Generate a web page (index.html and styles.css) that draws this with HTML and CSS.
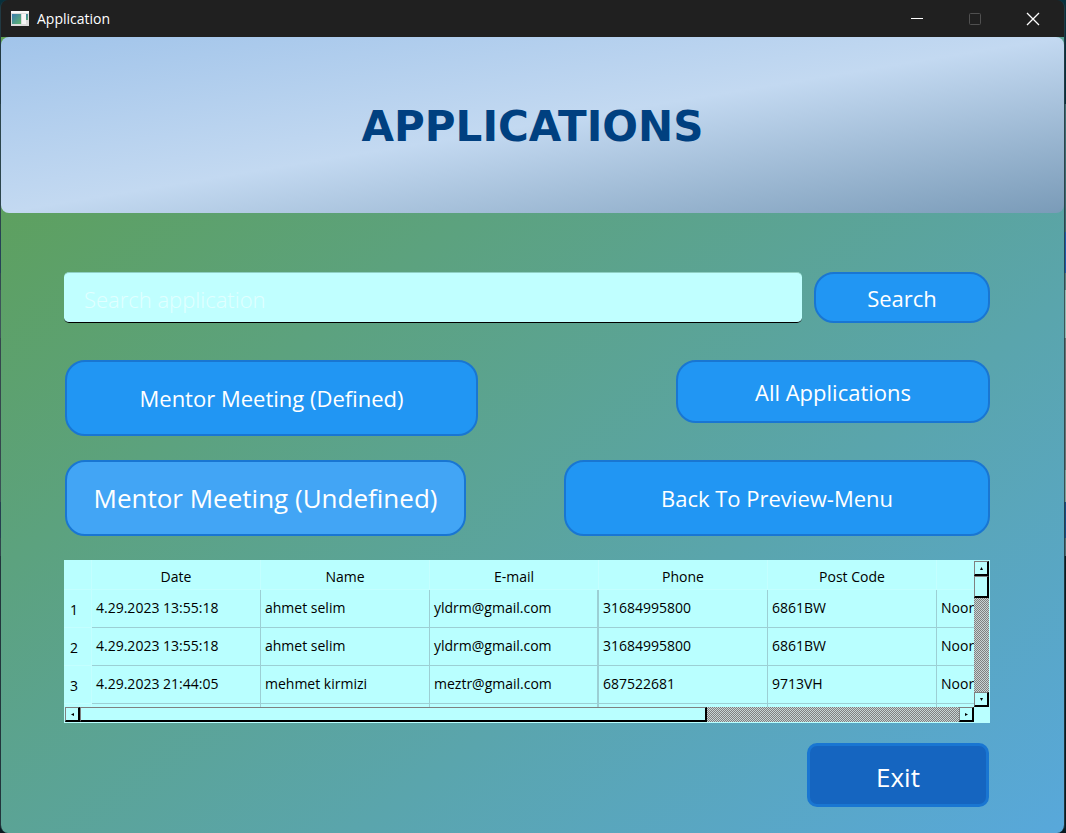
FILE: index.html
```html
<!DOCTYPE html>
<html lang="en">
<head>
<meta charset="utf-8">
<title>Application</title>
<link rel="stylesheet" href="styles.css">
</head>
<body>
<div class="window">
  <header class="titlebar">
    <svg class="app-icon" width="18" height="15" viewBox="0 0 18 15" aria-hidden="true">
      <defs><linearGradient id="g" x1="0" y1="0" x2="1" y2="1"><stop offset="0" stop-color="#3a7bb0"/><stop offset="1" stop-color="#5fb56c"/></linearGradient></defs>
      <rect width="18" height="15" fill="#dcdcdc"/>
      <rect x="0" y="0" width="18" height="2" fill="#f8f8f8"/>
      <rect x="1" y="3" width="9" height="10" fill="url(#g)"/>
      <rect x="11" y="3" width="4" height="10" fill="#f6f6f6"/>
      <rect x="15" y="3" width="2" height="6" fill="url(#g)"/>
    </svg>
    <span class="titlebar-text">Application</span>
    <div class="controls">
      <button class="control" aria-label="Minimize"><svg width="14" height="14"><path d="M1 6.500h12" stroke="#fff"/></svg></button>
      <button class="control" aria-label="Maximize" disabled><svg width="14" height="14"><rect x="1.500" y="1.500" width="11" height="11" rx="1" fill="none" stroke="#505050"/></svg></button>
      <button class="control" aria-label="Close"><svg width="14" height="14"><path d="M1 1l12 12M13 1L1 13" stroke="#fff" stroke-width="1.300"/></svg></button>
    </div>
  </header>
  <main class="client">
    <div class="banner"><h1>APPLICATIONS</h1></div>
    <div class="content">
      <form class="row search-row">
        <input class="search" type="text" placeholder="Search application" aria-label="Search application">
        <button class="btn" type="button">Search</button>
      </form>
      <div class="row filter-row">
        <button class="btn tall">Mentor Meeting (Defined)</button>
        <button class="btn medium">All Applications</button>
      </div>
      <div class="row menu-row">
        <button class="btn tall hovered">Mentor Meeting (Undefined)</button>
        <button class="btn tall">Back To Preview-Menu</button>
      </div>
      <div class="grid">
        <div class="viewport">
          <table>
            <colgroup><col class="col-index"><col><col><col><col><col><col></colgroup>
            <thead><tr><th></th><th>Date</th><th>Name</th><th>E-mail</th><th>Phone</th><th>Post Code</th><th></th></tr></thead>
            <tbody>
              <tr><th>1</th><td>4.29.2023 13:55:18</td><td>ahmet selim</td><td>yldrm@gmail.com</td><td>31684995800</td><td>6861BW</td><td>Noor</td></tr>
              <tr><th>2</th><td>4.29.2023 13:55:18</td><td>ahmet selim</td><td>yldrm@gmail.com</td><td>31684995800</td><td>6861BW</td><td>Noor</td></tr>
              <tr><th>3</th><td>4.29.2023 21:44:05</td><td>mehmet kirmizi</td><td>meztr@gmail.com</td><td>687522681</td><td>9713VH</td><td>Noor</td></tr>
              <tr><th></th><td></td><td></td><td></td><td></td><td></td><td></td></tr>
            </tbody>
          </table>
        </div>
        <div class="scroll vertical">
          <button class="arrow" aria-label="Scroll up"><svg width="5" height="5"><path d="M1 4h3L2.500 1z"/></svg></button>
          <div class="thumb"></div>
          <button class="arrow end" aria-label="Scroll down"><svg width="5" height="5"><path d="M1 1h3L2.500 4z"/></svg></button>
        </div>
        <div class="scroll horizontal">
          <button class="arrow" aria-label="Scroll left"><svg width="5" height="5"><path d="M4 1v3L1 2.500z"/></svg></button>
          <div class="thumb"></div>
          <button class="arrow end" aria-label="Scroll right"><svg width="5" height="5"><path d="M1 1v3l3-1.500z"/></svg></button>
        </div>
      </div>
      <div class="footer"><button class="btn exit">Exit</button></div>
    </div>
  </main>
</div>
</body>
</html>
```
FILE: styles.css
```css
* { box-sizing: border-box; }
body {
  margin: 0;
  padding: 0 1px 0 0;
  min-height: 100vh;
  display: flex;
  background: linear-gradient(#08303c 0 104px, #3f6a70 104px 232px, #1f5ba6 232px 273px, #5f8080 273px 290px, #93b8b0 290px 338px, #6b7373 338px 470px, #7f9f98 470px 502px, #194c80 502px 538px, #4f6a70 538px 556px, #0a1a20 556px);
  font-family: "Open Sans", "Noto Sans", sans-serif;
}
button { font-family: inherit; }
.window {
  flex: 1;
  display: flex;
  flex-direction: column;
  border: solid rgba(40, 60, 68, 0.8);
  border-width: 0 1px;
  border-radius: 8px;
  overflow: hidden;
}
.titlebar {
  display: flex;
  align-items: center;
  height: 37px;
  padding-left: 10px;
  background: #202020;
  color: #fff;
}
.titlebar-text { margin-left: 8px; font-size: 14px; }
.controls { display: flex; margin-left: auto; padding-right: 2px; }
.control {
  width: 58px;
  height: 36px;
  padding: 0;
  border: 0;
  background: none;
  display: grid;
  place-items: center;
}
.client {
  flex: 1;
  background: linear-gradient(to bottom right, #5e9f50, #58a8db);
}
.banner {
  display: grid;
  place-items: center;
  height: 176px;
  padding-top: 4px;
  border-radius: 8px;
  background: linear-gradient(to bottom right, #a1c4ea, #c3d9f1 50%, #7a9bb8);
}
h1 {
  margin: 0;
  font: bold 42px/48px Verdana, "DejaVu Sans", sans-serif;
  color: #004080;
}
.content { padding: 59px 74px 26px 63px; }
.row { display: grid; align-items: start; margin: 0; }
.search-row { grid-template-columns: 738fr 176fr; column-gap: 12px; height: 88px; }
.filter-row { grid-template-columns: 413fr 314fr; column-gap: 198px; height: 100px; padding-left: 1px; }
.menu-row { grid-template-columns: 401fr 426fr; column-gap: 98px; height: 100px; padding-left: 1px; }
.search {
  width: 100%;
  height: 51px;
  padding: 3px 20px 0;
  border: 0;
  border-top: 1px solid #8fd0c4;
  border-bottom: 1px solid #000;
  border-radius: 5px;
  background: #c0ffff;
  font: 300 22px "Open Sans", sans-serif;
}
.search::placeholder { color: #e2ffff; opacity: 1; }
.btn {
  height: 51px;
  padding: 0 8px;
  border: 2px solid #1976d2;
  border-radius: 20px;
  background: #2196f3;
  color: #fff;
  font-size: 22px;
  font-weight: 400;
  white-space: nowrap;
}
.btn.medium { height: 63px; }
.btn.tall { height: 76px; }
.btn.hovered { background: #42a5f5; font-size: 26px; }
.btn.exit {
  width: 182px;
  height: 64px;
  padding-top: 3px;
  border-width: 3px;
  border-radius: 10px;
  background: #1565c0;
  font-size: 26px;
}
.footer { display: flex; justify-content: flex-end; padding: 20px 1px 0 0; }
.grid {
  display: grid;
  grid-template-columns: minmax(0, 1fr) 15px;
  grid-template-rows: 147px 15px;
  padding: 0 1px 1px 0;
  background: #b9ffff;
}
.viewport { overflow: hidden; }
table {
  table-layout: fixed;
  width: 1042px;
  border-spacing: 0;
  font-size: 14px;
  line-height: 20px;
  color: #000;
}
col { width: 169px; }
.col-index { width: 28px; }
th, td {
  height: 38px;
  padding: 0 4px 1px;
  border: solid #9ccfd4;
  border-width: 0 1px 1px 0;
  text-align: left;
  font-weight: 400;
}
td:nth-child(4) { border-right-width: 2px; }
th { border-color: #c4ffff; }
tbody th { padding: 3px 6px 0; }
thead th { height: 30px; padding: 5px 4px 0; text-align: center; }
.scroll {
  display: flex;
  background: repeating-conic-gradient(#808080 0 25%, #c8d4d4 0 50%) 0 0 / 2px 2px;
}
.vertical { flex-direction: column; margin-top: 1px; }
.horizontal { margin-left: 1px; }
.arrow, .thumb {
  border: solid #000;
  border-width: 1px 2px 2px 1px;
  border-top-color: #808080;
  border-left-color: #808080;
  background: #b9ffff;
  outline: 0;
}
.arrow {
  display: grid;
  place-items: center;
  width: 15px;
  height: 15px;
  padding: 0;
}
.end { margin-top: auto; }
.horizontal .end { margin: 0 0 0 auto; }
.vertical .thumb { height: 22px; }
.horizontal .thumb { width: 69%; }
```
